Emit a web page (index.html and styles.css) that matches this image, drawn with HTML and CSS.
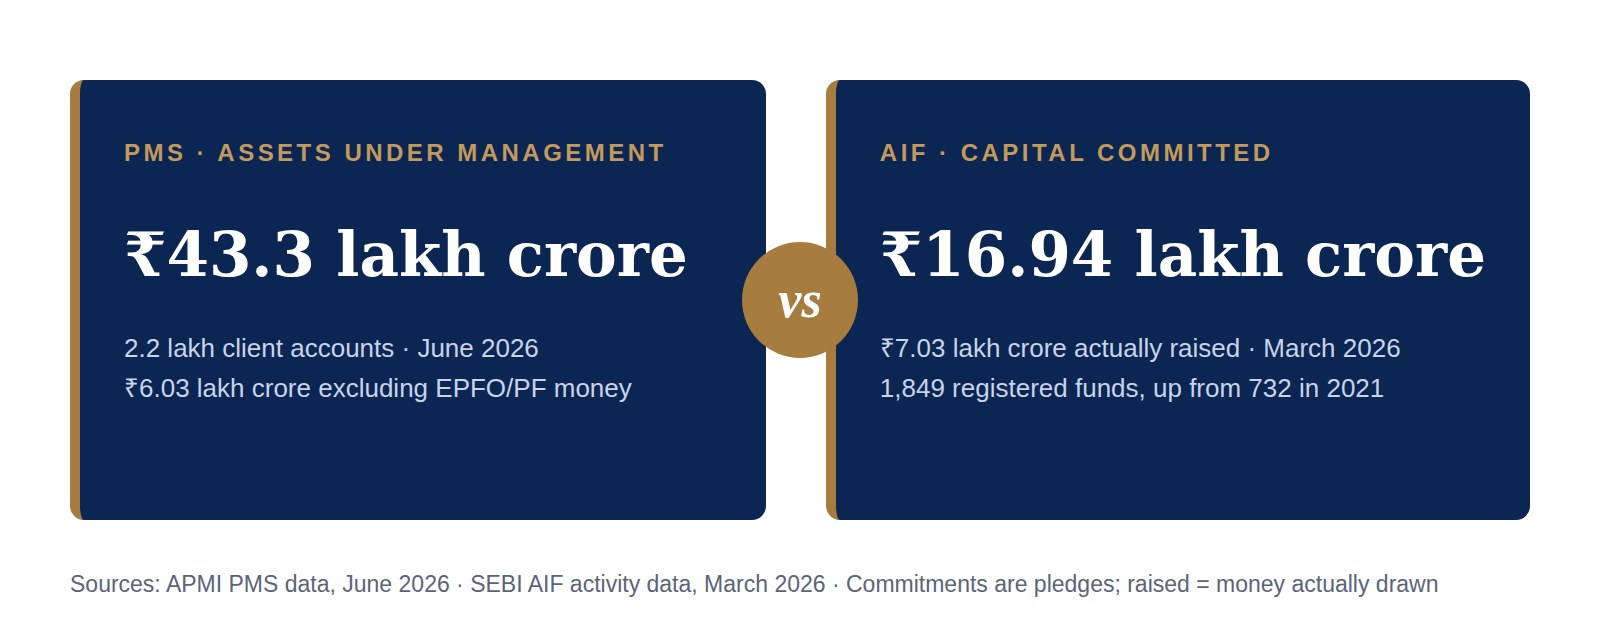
FILE: index.html
```html
<!DOCTYPE html>
<html lang="en">
<head>
<meta charset="utf-8">
<title>PMS vs AIF</title>
<link rel="stylesheet" href="styles.css">
</head>
<body>
<main class="page">
  <section class="compare">
    <article class="card">
      <div class="label">PMS · Assets under management</div>
      <div class="figure">₹43.3 lakh crore</div>
      <p class="meta">2.2 lakh client accounts · June 2026<br>₹6.03 lakh crore excluding EPFO/PF money</p>
    </article>
    <article class="card">
      <div class="label">AIF · Capital committed</div>
      <div class="figure">₹16.94 lakh crore</div>
      <p class="meta">₹7.03 lakh crore actually raised · March 2026<br>1,849 registered funds, up from 732 in 2021</p>
    </article>
    <div class="vs"><span>vs</span></div>
  </section>
  <p class="sources">Sources: APMI PMS data, June 2026 · SEBI AIF activity data, March 2026 · Commitments are pledges; raised = money actually drawn</p>
</main>
</body>
</html>
```

FILE: styles.css
```css
* { box-sizing: border-box; }
html, body { margin: 0; padding: 0; background: #ffffff; }
body { font-family: "Liberation Sans", Arial, sans-serif; }

.page {
  padding: 80px 70px 0;
}

.compare {
  position: relative;
  display: grid;
  grid-template-columns: 1fr 1fr;
  gap: 60px;
}

.card {
  height: 440px;
  background: #0b2652;
  border-left: 10px solid #a67c3f;
  border-radius: 14px;
  padding: 59px 44px 0;
}

.label {
  font-size: 24px;
  line-height: 28px;
  font-weight: 700;
  letter-spacing: 0.145em;
  text-transform: uppercase;
  color: #c39a5b;
  white-space: nowrap;
}

.figure {
  margin-top: 57px;
  font-family: "DejaVu Serif", "Liberation Serif", serif;
  font-weight: 700;
  font-size: 61px;
  line-height: 61px;
  color: #ffffff;
  white-space: nowrap;
}

.meta {
  margin: 43px 0 0;
  font-size: 26px;
  line-height: 40px;
  color: #c9d3ea;
}

.vs {
  position: absolute;
  left: 50%;
  top: 50%;
  width: 116px;
  height: 116px;
  margin: -58px 0 0 -58px;
  border-radius: 50%;
  background: #a67c3f;
  display: flex;
  align-items: center;
  justify-content: center;
}

.vs span {
  font-family: "Liberation Serif", "DejaVu Serif", serif;
  font-style: italic;
  font-weight: 700;
  font-size: 52px;
  line-height: 1;
  color: #ffffff;
}

.sources {
  margin: 51px 0 0;
  font-size: 23px;
  line-height: 26px;
  color: #5b6478;
}
```
